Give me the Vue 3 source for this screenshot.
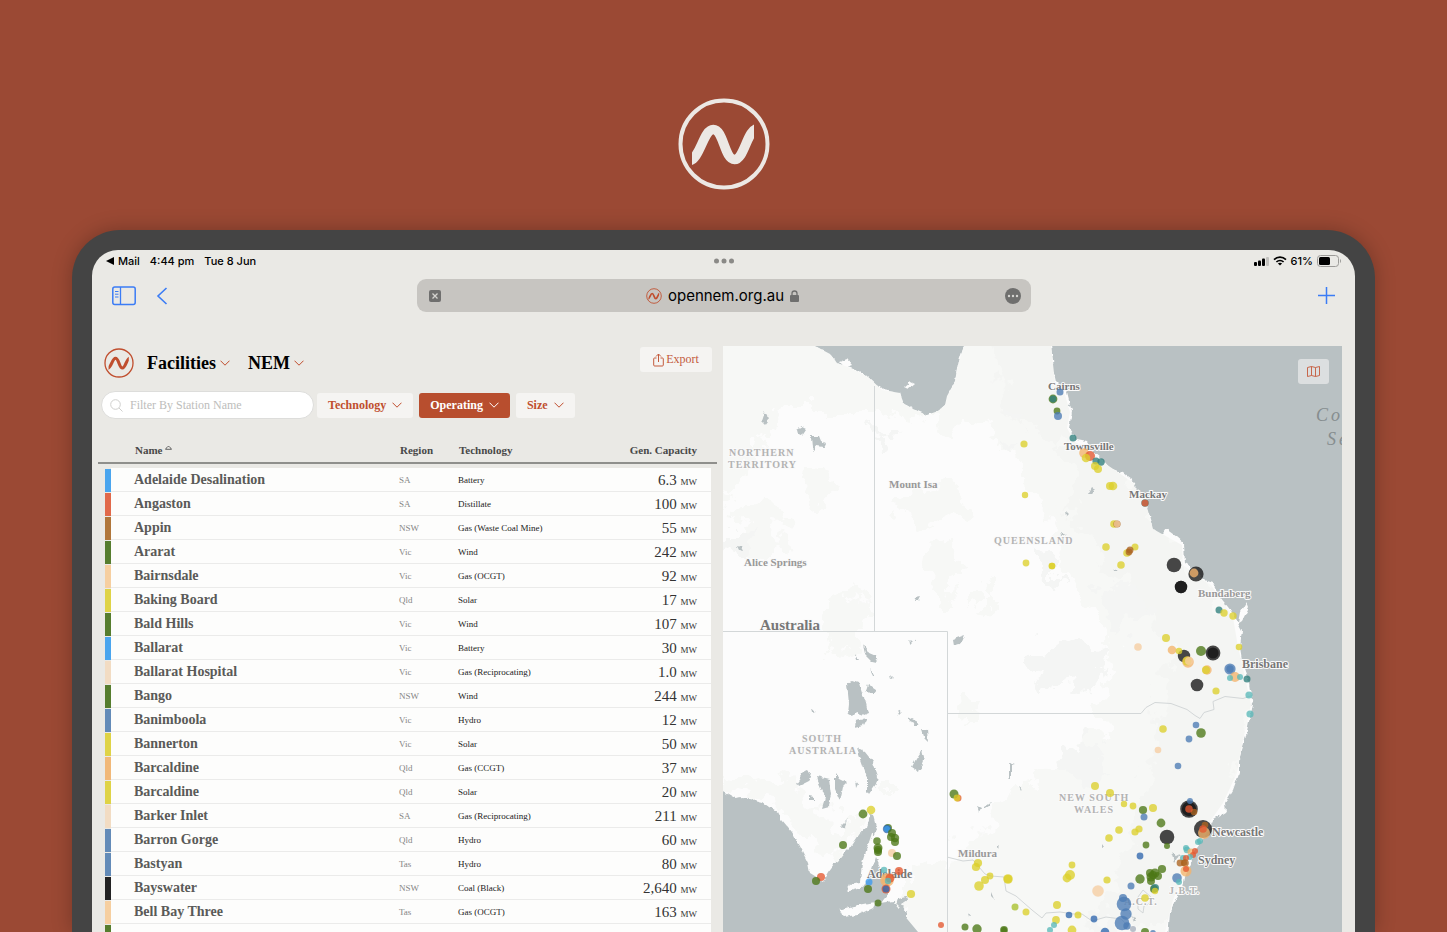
<script setup>
import { ref } from 'vue'

const query = ref('')

const tones = {
  blue: '#4aa5ee',
  red: '#e1694a',
  brown: '#b0763a',
  green: '#567d2e',
  peach: '#f6cfa0',
  yellow: '#dfd346',
  cream: '#f2dcc3',
  hydro: '#638bb8',
  orange: '#f1b878',
  black: '#232323'
}

const facilities = [
  ['Adelaide Desalination', 'SA', 'Battery', '6.3', 'blue'],
  ['Angaston', 'SA', 'Distillate', '100', 'red'],
  ['Appin', 'NSW', 'Gas (Waste Coal Mine)', '55', 'brown'],
  ['Ararat', 'Vic', 'Wind', '242', 'green'],
  ['Bairnsdale', 'Vic', 'Gas (OCGT)', '92', 'peach'],
  ['Baking Board', 'Qld', 'Solar', '17', 'yellow'],
  ['Bald Hills', 'Vic', 'Wind', '107', 'green'],
  ['Ballarat', 'Vic', 'Battery', '30', 'blue'],
  ['Ballarat Hospital', 'Vic', 'Gas (Reciprocating)', '1.0', 'cream'],
  ['Bango', 'NSW', 'Wind', '244', 'green'],
  ['Banimboola', 'Vic', 'Hydro', '12', 'hydro'],
  ['Bannerton', 'Vic', 'Solar', '50', 'yellow'],
  ['Barcaldine', 'Qld', 'Gas (CCGT)', '37', 'orange'],
  ['Barcaldine', 'Qld', 'Solar', '20', 'yellow'],
  ['Barker Inlet', 'SA', 'Gas (Reciprocating)', '211', 'cream'],
  ['Barron Gorge', 'Qld', 'Hydro', '60', 'hydro'],
  ['Bastyan', 'Tas', 'Hydro', '80', 'hydro'],
  ['Bayswater', 'NSW', 'Coal (Black)', '2,640', 'black'],
  ['Bell Bay Three', 'Tas', 'Gas (OCGT)', '163', 'peach']
]

const filters = [
  { label: 'Technology', active: false },
  { label: 'Operating', active: true },
  { label: 'Size', active: false }
]

const fills = {
  y: '#dccf2c',
  g: '#4b7716',
  b: '#4c7bb3',
  n: '#2f66ad',
  t: '#2f7f7c',
  a: '#5bb8b8',
  o: '#f3b36c',
  p: '#f6cda2',
  r: '#e4572f',
  w: '#ac6420',
  k: '#141414',
  s: '#3b9bf0',
  l: '#a9c02c',
  m: '#a8b0be'
}

// kind, x, y, radius
const pins = `b 1060 392 3.5,g 1053 399 4.4,t 1053 399 3.4,g 1057 411 3.4,b 1058 416 4,t 1073 438 3.5,o 1084 453 4.8,r 1090 456 5,y 1086 458 4.3,t 1096 461 3.6,t 1101 462 3.7,y 1095 466 4,y 1098 469 4,y 1110 486 4,y 1113 486 4.3,
y 1024 444 3.6,y 1025 495 3.2,t 1145 503 3.7,r 1145 503 3.5,y 1114 524 3.8,w 1117 524 3.6,p 1117 524 3.2,y 1106 547 3.8,y 1135 547 3.5,y 1127 553 3.8,w 1130 550 3.5,w 1129 552 3.4,y 1121 565 3.8,y 1026 563 3.4,y 1052 566 3.3,y 1052 566 3.3,
k 1174 565 7.3,k 1196 574 7.6,o 1194 573 4.4,k 1181 587 6.2,k 1181 587 6.2,t 1219 610 3.5,y 1224 613 3.7,y 1233 616 3.7,y 1166 638 4,p 1138 647 3.8,o 1172 650 4.3,k 1184 656 6.2,y 1179 651 3.3,o 1188 662 5.8,y 1187 661 4.5,p 1189 661 4,
g 1201 651 5,k 1213 653 7.4,k 1213 653 5.6,y 1239 647 3.3,o 1207 670 4.7,y 1206 670 4,k 1197 685 6.3,y 1216 691 3.6,b 1230 669 5.6,b 1230 669 3.7,o 1235 677 5,a 1230 678 3,a 1240 677 3,t 1247 679 3.5,a 1249 695 3.6,a 1250 714 3.6,
b 1196 725 3.3,g 1201 733 4.8,b 1189 739 3.4,y 1163 729 3.8,p 1158 750 3.3,b 1178 766 3.3,y 1095 786 4,y 1110 793 4,y 1124 804 3.2,y 1133 806 3.4,y 1153 808 4,g 1143 810 4.1,g 1161 823 4.4,b 1144 817 3.5,y 1119 830 3.8,y 1109 838 3.8,y 1135 832 3.6,y 1139 829 3.6,
k 1189 809 8.8,k 1189 809 7.2,b 1190 801 3,w 1194 812 3.3,r 1189 809 3.8,k 1203 829 9,w 1205 825 3.3,o 1204 833 6,r 1203 829 3.8,k 1167 837 7.3,g 1167 846 3,g 1146 845 3.4,n 1140 856 3.4,a 1198 842 3,a 1200 841 3,a 1186 848 3,a 1187 850 3.3,
o 1191 852 3.5,r 1195 851 3,r 1193 855 3,a 1190 857 3,a 1183 858 3,r 1186 858 3,w 1180 863 3.4,w 1185 863 3.8,w 1184 863 3,o 1186 871 5.5,r 1186 869 3,b 1177 878 4.8,a 1179 882 3,g 1162 869 4.1,g 1140 879 4.7,g 1150 873 4,g 1155 873 4.5,g 1158 876 4,g 1151 877 4.5,g 1151 881 4,g 1153 875 4,
g 1154 889 4,t 1155 888 4,y 1155 891 3.2,y 1072 865 3.4,y 1070 875 5,y 1067 878 4.4,y 1107 880 3.6,b 1131 886 3.5,p 1098 891 5.8,y 1145 898 3.8,b 1123 898 4,b 1124 904 7.3,b 1126 914 5.7,b 1122 923 7.3,b 1127 926 3.7,m 1133 929 3,g 1145 932 4,b 1153 933 3,
y 1057 905 4,y 1026 912 3.5,y 1056 920 3.9,y 1078 915 3.5,y 1072 930 4.4,n 1069 915 3.3,n 1094 919 3.4,n 1105 932 4.3,a 1054 925 3,a 1050 930 3,r 958 798 3.5,g 954 794 4.5,y 957 798 3.4,g 863 814 4.4,y 871 810 4.3,g 888 828 4,n 887 829 4.2,s 887 829 3,
g 892 833 4,g 891 837 4,g 895 838 4.2,g 895 842 4,g 877 841 3.8,g 878 848 4.5,g 878 850 4,g 878 852 4,p 892 853 4,g 897 856 4,g 843 845 4,r 821 877 4,g 816 881 4,a 884 870 3.2,r 899 871 4,o 887 880 6.8,o 887 880 5,r 890 878 4.5,a 888 881 3.2,
s 869 882 3.5,g 868 889 4,r 886 889 4.5,n 886 889 3.5,y 911 894 4.1,g 878 903 3.5,y 978 863 4.1,y 976 867 4.1,y 985 880 4,y 990 876 3.4,y 979 886 4.8,y 1008 879 4.8,y 1008 879 4,l 1015 907 3.5,r 941 925 3,g 965 927 3.5,g 977 929 4.7,g 1004 930 3.9,g 1004 930 3`
  .split(/,\s*/)
  .map((entry) => {
    const [kind, x, y, r] = entry.trim().split(' ')
    return { fill: fills[kind], x, y, r }
  })

const places = [
  { name: 'Cairns', x: 1048, y: 390, c: 'city' },
  { name: 'Townsville', x: 1064, y: 450, c: 'city' },
  { name: 'Mackay', x: 1129, y: 498, c: 'city' },
  { name: 'Mount Isa', x: 889, y: 488, c: 'city pale' },
  { name: 'Alice Springs', x: 744, y: 566, c: 'city pale' },
  { name: 'Bundaberg', x: 1198, y: 597, c: 'city pale' },
  { name: 'Mildura', x: 958, y: 857, c: 'city pale' },
  { name: 'Brisbane', x: 1242, y: 668, c: 'metro' },
  { name: 'Newcastle', x: 1212, y: 836, c: 'metro' },
  { name: 'Sydney', x: 1198, y: 864, c: 'metro' },
  { name: 'Adelaide', x: 867, y: 878, c: 'metro' },
  { name: 'Australia', x: 760, y: 630, c: 'country' },
  { name: 'NORTHERN', x: 729, y: 456, c: 'state' },
  { name: 'TERRITORY', x: 728, y: 468, c: 'state' },
  { name: 'QUEENSLAND', x: 994, y: 544, c: 'state' },
  { name: 'SOUTH', x: 802, y: 742, c: 'state' },
  { name: 'AUSTRALIA', x: 789, y: 754, c: 'state' },
  { name: 'NEW SOUTH', x: 1059, y: 801, c: 'state' },
  { name: 'WALES', x: 1074, y: 813, c: 'state' },
  { name: 'J.B.T.', x: 1169, y: 894, c: 'state' },
  { name: 'A.C.T.', x: 1124, y: 905, c: 'state' },
  { name: 'Coral', x: 1316, y: 421, c: 'sea' },
  { name: 'Sea', x: 1327, y: 445, c: 'sea' }
]
</script>

<template>
  <div class="stage">
    <svg class="defs" aria-hidden="true">
      <symbol id="wave" viewBox="0 0 92 92">
        <clipPath id="wave-clip"><rect x="14" y="20" width="62" height="52" /></clipPath>
        <path
          d="M10 63C22 63 25 31.500 35.300 31.500C45.500 31.500 46.500 61.500 56.500 61.500C66.500 61.500 69 31 80 30.500"
          fill="none" stroke="currentColor" stroke-width="9.600" clip-path="url(#wave-clip)"
        />
      </symbol>
      <symbol id="chevron" viewBox="0 0 10 6">
        <path d="M.500 .700L5 5.200 9.500 .700" fill="none" stroke="currentColor" stroke-width="1" />
      </symbol>
    </svg>

    <header class="brand">
      <svg class="brand-mark" viewBox="0 0 92 92" role="img" aria-label="OpenNEM">
        <circle cx="46" cy="46" r="43.500" fill="none" stroke="currentColor" stroke-width="4" />
        <use href="#wave" width="92" height="92" />
      </svg>
    </header>

    <div class="device">
      <div class="screen">
        <div class="status">
          <div class="status-left">
            <span class="back-app">
              <svg width="8" height="8" viewBox="0 0 8 8" aria-hidden="true"><path d="M0 4l8-4v8z" /></svg>
              Mail
            </span>
            <span>4:44 pm</span>
            <span>Tue 8 Jun</span>
          </div>
          <svg width="20" height="6" viewBox="0 0 20 6" fill="#8b8a87" aria-hidden="true">
            <circle cx="2.500" cy="3" r="2.500" /><circle cx="10" cy="3" r="2.500" /><circle cx="17.500" cy="3" r="2.500" />
          </svg>
          <div class="status-right">
            <svg width="15" height="10" viewBox="0 0 15 10" aria-hidden="true">
              <rect x="0" y="6" width="3" height="4" rx="1" /><rect x="4" y="4.500" width="3" height="5.500" rx="1" />
              <rect x="8" y="2.500" width="3" height="7.500" rx="1" /><rect x="12" y="1" width="3" height="9" rx="1" fill="#c2c1be" />
            </svg>
            <svg width="14" height="10" viewBox="0 0 14 10" aria-hidden="true">
              <g fill="none" stroke="#000" stroke-width="1.700">
                <path d="M1 3.600C4.500.200 9.500.200 13 3.600" /><path d="M3.400 6C5.500 4 8.500 4 10.600 6" />
              </g>
              <path d="M4.900 7.400C6 6.500 8 6.500 9.100 7.400L7 9.600z" />
            </svg>
            <span>61%</span>
            <svg width="24" height="12" viewBox="0 0 24 12" aria-hidden="true">
              <rect x=".500" y=".500" width="21" height="11" rx="3" fill="none" stroke="#9c9b98" />
              <rect x="2" y="2" width="11" height="8" rx="1.500" />
              <path d="M23 4v4q1-.500 1-2t-1-2" fill="#9c9b98" />
            </svg>
          </div>
        </div>

        <div class="toolbar">
          <div class="tools">
            <button class="tool" type="button" aria-label="Show sidebar">
              <svg width="24" height="20" viewBox="0 0 24 20" fill="none" stroke="currentColor">
                <rect x=".800" y="1" width="22.400" height="17.500" rx="2" stroke-width="1.500" />
                <path d="M8.500 1v17.500" stroke-width="1.300" /><path d="M3 5.500h3.500M3 8.200h3.500M3 11h3.500" stroke-width="1" />
              </svg>
            </button>
            <button class="tool" type="button" aria-label="Back">
              <svg width="12" height="18" viewBox="0 0 12 18" fill="none" stroke="currentColor" stroke-width="1.600">
                <path d="M10.500 1L2 9l8.500 8" />
              </svg>
            </button>
          </div>
          <div class="address">
            <svg width="12" height="12" viewBox="0 0 12 12" aria-hidden="true">
              <rect width="12" height="12" rx="2" fill="#6f6f6e" /><path d="M3.500 3.500l5 5m0-5l-5 5" stroke="#d5d4d1" stroke-width="1.300" />
            </svg>
            <div class="site">
              <svg class="rust" width="16" height="16" viewBox="0 0 92 92" aria-hidden="true">
                <circle cx="46" cy="46" r="42" fill="none" stroke="currentColor" stroke-width="5" />
                <use href="#wave" width="92" height="92" />
              </svg>
              <span>opennem.org.au</span>
              <svg width="9" height="12" viewBox="0 0 9 12" aria-hidden="true">
                <rect x="0" y="5" width="9" height="7" rx="1" fill="#6f6f6e" />
                <path d="M2 5.500V3.500a2.500 2.500 0 0 1 5 0v2" fill="none" stroke="#6f6f6e" stroke-width="1.300" />
              </svg>
            </div>
            <svg width="16" height="16" viewBox="0 0 16 16" aria-hidden="true">
              <circle cx="8" cy="8" r="8" fill="#6f6f6e" />
              <g fill="#d5d4d1"><circle cx="4" cy="8" r="1.200" /><circle cx="8" cy="8" r="1.200" /><circle cx="12" cy="8" r="1.200" /></g>
            </svg>
          </div>
          <div class="tools end">
            <button class="tool" type="button" aria-label="New tab">
              <svg width="17" height="17" viewBox="0 0 17 17" stroke="currentColor" stroke-width="1.500">
                <path d="M8.500 0v17M0 8.500h17" />
              </svg>
            </button>
          </div>
        </div>

        <main class="content">
          <section class="panel">
            <div class="heading">
              <svg class="rust" width="30" height="30" viewBox="0 0 92 92" role="img" aria-label="OpenNEM">
                <circle cx="46" cy="46" r="43" fill="none" stroke="currentColor" stroke-width="4" />
                <use href="#wave" width="92" height="92" />
              </svg>
              <button class="title" type="button">Facilities <svg class="rust" width="10" height="6"><use href="#chevron" /></svg></button>
              <button class="title" type="button">NEM <svg class="rust" width="10" height="6"><use href="#chevron" /></svg></button>
              <button class="export" type="button">
                <svg width="11" height="14" viewBox="0 0 11 14" fill="none" stroke="currentColor">
                  <path d="M3.500 5H1.500Q.700 5 .700 5.800V12q0 1 1 1h7.600q1 0 1-1V5.800Q10.300 5 9.500 5H7.500M5.500 9V1M3 3.500L5.500 1 8 3.500" />
                </svg>
                Export
              </button>
            </div>

            <div class="filters">
              <label class="search">
                <svg width="13" height="13" viewBox="0 0 13 13" fill="none" stroke="#cfcfcd" aria-hidden="true">
                  <circle cx="5.500" cy="5.500" r="4.800" /><path d="M9 9l3.500 3.500" />
                </svg>
                <input v-model="query" type="text" placeholder="Filter By Station Name" aria-label="Filter By Station Name" />
              </label>
              <button v-for="f in filters" :key="f.label" type="button" class="filter" :class="{ active: f.active }">
                {{ f.label }} <svg width="10" height="6"><use href="#chevron" /></svg>
              </button>
            </div>

            <table>
              <colgroup><col class="c-bar" /><col /><col class="c-region" /><col class="c-tech" /><col class="c-cap" /></colgroup>
              <thead>
                <tr>
                  <th></th>
                  <th class="name">Name <svg width="7" height="5" viewBox="0 0 7 5" aria-hidden="true"><path d="M.500 4.300Q1 3 2 2.600L3.500 1 5 2.600Q6 3 6.500 4.300z" fill="none" stroke="#555" stroke-width=".900" /></svg></th>
                  <th>Region</th>
                  <th>Technology</th>
                  <th class="cap">Gen. Capacity</th>
                </tr>
              </thead>
              <tbody>
                <tr v-for="(f, i) in facilities" :key="i">
                  <td class="bar"><span :style="{ background: tones[f[4]] }"></span></td>
                  <td class="name">{{ f[0] }}</td>
                  <td class="region">{{ f[1] }}</td>
                  <td class="tech">{{ f[2] }}</td>
                  <td class="cap">{{ f[3] }} <small>MW</small></td>
                </tr>
                <tr>
                  <td class="bar"><span :style="{ background: tones.green }"></span></td>
                  <td></td>
                  <td></td>
                  <td></td>
                  <td class="cap"></td>
                </tr>
              </tbody>
            </table>
          </section>

          <section class="map">
            <svg class="canvas" viewBox="723 346 619 586" preserveAspectRatio="xMinYMin slice" role="img" aria-label="Map of facilities">
              <defs>
                <filter id="coast" x="-5%" y="-5%" width="110%" height="110%">
                  <feTurbulence type="fractalNoise" baseFrequency=".14" numOctaves="3" seed="4" />
                  <feDisplacementMap in="SourceGraphic" scale="5" xChannelSelector="R" yChannelSelector="G" />
                </filter>
                <filter id="rough" x="-5%" y="-5%" width="110%" height="110%">
                  <feTurbulence type="fractalNoise" baseFrequency=".05" numOctaves="4" seed="9" />
                  <feDisplacementMap in="SourceGraphic" scale="46" xChannelSelector="R" yChannelSelector="G" />
                </filter>
                <clipPath id="mainland">
                  <path d="M723 346H815L830 354 837 363 853 369 868 377 882 390 900 393 903 403 913 409 927 415 938 411 945 405 947 396 955 382 957 368 961 355 964 346H1051L1055 382 1065 395 1070 412 1067 428 1075 442 1090 450 1103 462 1135 484 1145 500 1153 529 1182 545 1183 565 1211 585 1233 617 1238 647 1245 677 1251 705 1243 740 1237 773 1223 803 1211 820 1195 847 1183 877 1173 900 1165 932H918L893 902 887 893 883 887 876 862 870 882 862 885 862 863 873 830 868 817 858 837 830 872 823 880 810 873 800 847 782 820 763 802 723 791Z" />
                </clipPath>
              </defs>
              <rect x="723" y="346" width="619" height="586" fill="#b9c1c3" />
              <g filter="url(#coast)" fill="#fcfcfc">
                <path d="M700 320H815V346L830 354 837 363 853 369 868 377 882 390 900 393 903 403 913 409 927 415 938 411 945 405 947 396 955 382 957 368 961 355 964 346V320H1051V346L1053 360 1054 373 1056 382 1067 393 1072 412 1069 428 1077 440 1087 442 1092 450 1103 460 1110 468 1123 473 1135 482 1137 490 1146 498 1148 510 1153 527 1159 538 1166 529 1177 537 1184 543 1185 563 1197 570 1205 580 1213 583 1220 597 1228 607 1234 615 1242 630 1240 647 1242 660 1248 677 1250 690 1253 705 1250 717 1245 740 1239 760 1239 773 1233 790 1225 803 1226 812 1213 820 1207 833 1197 847 1192 860 1185 877 1183 888 1175 900 1170 913 1167 950H925L918 932 913 920 902 907 893 902 880 904 889 893 883 885 887 877 880 867 876 858 872 870 868 880 862 888 847 892 850 884 860 882 862 863 867 847 875 830 870 815 867 827 858 835 850 847 837 860 828 872 823 881 810 873 808 863 800 847 792 832 782 820 778 812 770 807 763 802 743 797 735 798 723 791H700Z" />
                <path d="M840 910L853 906 875 902 872 908 858 915 843 917zM1247 602l-6 10-2 11 3-2 7-14zM904 388l7-6 4 2-7 6zM840 362l8-3 5 6-8 3z" />
              </g>

              <g clip-path="url(#mainland)">
                <g filter="url(#rough)">
                  <path fill="#f7f8f6" d="M700 330h370l200 280 10 340H900l50-90 60-60 90-70 10-90-50-80-20-80-60-50-100-20-100 0-60 110h-40z" />
                  <path fill="#f2f4f2" d="M985 340h70l20 80 70 80 60 90 60 60-10 60-30 110-60 110-70 0 30-80 30-100 15-100-40-60-50-60-50-70z" opacity=".6" />
                  <g fill="#f7f8f6">
                    <path d="M735 520l30-20 20 15-10 40-25 5zM800 480l30-5 5 20-20 10zM825 600l25-10 20 20-15 40-25 5zM925 550l20-12 15 30-10 30-20 0zM975 590l15-5 0 20-15 10zM890 500l60-20 20 30-50 20zM723 770l70 15 60 60-20 20-50-60-60-15zM900 870l60-10 60 40-20 50h-100zM1020 420l40 20 20 60-20 20-40-50z" />
                    <path d="M845 815l20 0 0 20-20 10zM885 780l10 0 0 20-10 0zM965 700l15 5-5 20-15 0z" />
                  </g>
                  <g fill="#f4f5f4">
                    <path d="M730 530l25-5-5 25-20 5zM870 425l20 10-10 10zM1010 400l15 8-10 12zM1000 440l20 5-10 10zM1030 655l50-20 30 20-20 30-50 5zM1060 760l30-20 20 30-20 20zM1100 590l30-10 20 30-30 20zM1040 550l20 10 0 25-20-10z" />
                  </g>
                </g>
              </g>

              <g filter="url(#coast)" fill="#b9c1c3">
                <path d="M764 412l3 4 1 5-3 4-4-4zM797 430l5-3 4 2-4 6-4-1zM811 436l8 0 2 5 5 2-2 4-7-1-2 5-3-3zM737 546l4 1 2 4-4-1zM916 598l5-1-2 4-4 0zM953 639l11-4-4 9-6 1zM810 708l6 3-5 1zM809 796l5 1 0 4-5 0z" />
                <path d="M847 683l5-2 6 2 3 10 6 10 2 10-5 2-8-3-4 4-4-2 1-10zM855 720l12-2-4 8-9 2z" />
                <path d="M857 748l8 4 8 10 5 14-2 8-7 10-2-3 0-14-4-12zM817 776l13 3 2 16-3 11-7 2 3-10-6-14zM796 784l10-14 5 2-3 10-8 4zM835 773l4 6 8 4-4 4-3 14-5-12zM855 780l3 4-2 4zM842 825l6-6-3 8-4 1zM855 655l4 6-3 0zM863 645l5 8 7 3 2 6-5-1-7-7zM870 669l6 6-3 0zM868 684l9 6-4 5-7-5zM908 716l8 4 3 6-5 0zM922 729l5 1 1 12-3-3zM922 750l2 8-5 14-7-5 4-8zM890 675l3 3-2 1zM897 710l4 3-2 2zM909 640l3 3-2 2zM914 638l3 2-2 1z" />
                <path d="M873 815l2 8 2 8-3 2-4-6-3-5 3-8zM898 898l9-2 1 4-6 4 3 5-4 0-5-5zM1009 762l6 2-4 1 0 14-2-2zM977 806l4 2-2 4zM984 807l7-5-2 4-5 3zM1018 786l4 3-2 1zM997 846l2 2-2 1zM991 892l3 7-3-3zM968 913l3 4-2 1zM1092 487l4 3-4 4-4 0zM1061 532l5 2-4 2zM1065 512l3 3-2 2zM1113 568l6 3-5 0zM1172 852l4 4 4-2-5 8zM1103 843l2 3-2 1zM1130 912l6 9-2 0zM1224 599l10-4 10 3 1 6-7 9-9-7zM1137 480l4 4-3 6-4-4z" />
              </g>

              <g fill="none" stroke="#d3d7d8">
                <path d="M874.500 386V631M723 631.500H947.500V932M947.500 713.500H1141l5-6 9-5 16 1 8 3 8 3 8 6 5 3 4-6 10-3-1-8 12-5 9 1 9 1 9-3M947 857l16 4 10-1 12 14 6 2 13 1 2 14 10 5 16 14 10 8 4-5 14-1 14 2 8 0 10 7 14-4 15 2 6 6M1143 890l9 8-3 6-5 2-1 7-5-4 0-12z" />
              </g>

              <text v-for="(p, i) in places" :key="'t' + i" :x="p.x" :y="p.y" :class="p.c">{{ p.name }}</text>
              <circle v-for="(p, i) in pins" :key="i" :cx="p.x" :cy="p.y" :r="p.r" :fill="p.fill" opacity=".78" />
            </svg>
            <button class="map-toggle" type="button" aria-label="Toggle map">
              <svg width="13" height="11" viewBox="0 0 13 11" fill="none" stroke="currentColor" stroke-width=".900">
                <path d="M.500 1.500L4.500.500 8.500 1.500 12.500.500V9.500L8.500 10.500 4.500 9.500.500 10.500zM4.500.500v9M8.500 1.500v9" />
              </svg>
            </button>
          </section>
        </main>
      </div>
    </div>
  </div>
</template>

<style>
html,
body {
  margin: 0;
  background: #9b4934;
}
</style>

<style scoped>
.stage {
  display: flex;
  flex-direction: column;
  height: 100vh;
  overflow: hidden;
  background: #9b4934;
  font-family: "Liberation Serif", serif;
}
.defs {
  position: absolute;
  width: 0;
  height: 0;
}
svg {
  flex: none;
}
button {
  border: 0;
  margin: 0;
  padding: 0;
  background: none;
  font: inherit;
  color: inherit;
}
.brand {
  display: flex;
  justify-content: center;
  padding: 98px 0 40px;
  color: #ece8e4;
}
.brand-mark {
  width: 92px;
  height: 92px;
}
.device {
  display: flex;
  flex: 1;
  min-height: 0;
  margin: 0 72px;
  padding: 20px 20px 0;
  border-radius: 48px 48px 0 0;
  background: #444;
  box-shadow: 0 0 20px rgba(0, 0, 0, 0.25);
}
.screen {
  display: flex;
  flex: 1;
  flex-direction: column;
  min-width: 0;
  border-radius: 26px 26px 0 0;
  background: #eae9e5;
}
.status {
  display: grid;
  grid-template-columns: 1fr auto 1fr;
  align-items: center;
  height: 22px;
  padding: 0 14px;
  font: 500 11px "Inter", sans-serif;
}
.status-left,
.status-right,
.back-app {
  display: flex;
  align-items: center;
}
.status-left {
  gap: 10px;
}
.back-app {
  gap: 4px;
}
.status-right {
  justify-content: flex-end;
  gap: 4px;
}
.toolbar {
  display: grid;
  grid-template-columns: 1fr 614px 1fr;
  align-items: center;
  height: 33px;
  margin-top: 7px;
  padding: 0 20px;
}
.tools {
  display: flex;
  align-items: center;
  gap: 20px;
}
.end {
  justify-content: flex-end;
}
.tool {
  display: flex;
  color: #3b7cf5;
}
.address {
  display: flex;
  align-items: center;
  justify-content: space-between;
  height: 33px;
  box-sizing: border-box;
  padding: 0 10px 0 12px;
  border-radius: 9px;
  background: #c7c5c1;
}
.site {
  display: flex;
  align-items: center;
  gap: 6px;
  font: 15px "Inter", sans-serif;
}
.rust {
  color: #c04e2e;
}
.content {
  display: grid;
  flex: 1;
  grid-template-columns: 1fr 1fr;
  grid-template-rows: minmax(0, 1fr);
  gap: 6px;
  min-height: 0;
  margin-top: 34px;
  padding: 0 13px 0 6px;
}
.panel {
  min-width: 0;
  overflow: hidden;
}
.heading {
  display: flex;
  align-items: center;
  height: 34px;
  padding: 0 5px 0 6px;
}
.title {
  display: flex;
  align-items: center;
  gap: 4px;
  margin-left: 13px;
  font-size: 18px;
  font-weight: 700;
}
.title + .title {
  margin-left: 18px;
}
.export {
  display: flex;
  align-items: center;
  justify-content: center;
  align-self: flex-start;
  gap: 2px;
  width: 72px;
  height: 25px;
  margin: 1px 0 0 auto;
  border-radius: 3px;
  background: #f5f4f2;
  color: #c45a3c;
  font-size: 12px;
}
.filters {
  display: flex;
  align-items: center;
  height: 28px;
  margin-top: 11px;
  padding-left: 3px;
}
.search {
  display: flex;
  align-items: center;
  gap: 7px;
  box-sizing: border-box;
  width: 213px;
  height: 28px;
  margin-right: 3px;
  padding: 0 8px;
  border: 1px solid #dddddb;
  border-radius: 14px;
  background: #fff;
}
.search input {
  flex: 1;
  min-width: 0;
  padding: 0;
  border: 0;
  outline: 0;
  background: none;
  font: 12px "Liberation Serif", serif;
}
.search input::placeholder {
  color: #bdbdbb;
}
.filter {
  display: flex;
  align-items: center;
  gap: 6px;
  height: 25px;
  margin-right: 6px;
  padding: 0 11px;
  border-radius: 3px;
  background: #f5f4f2;
  color: #c04e2e;
  font-size: 12px;
  font-weight: 700;
}
.filter.active {
  background: #b84e2e;
  color: #fff;
}
table {
  width: 100%;
  margin-top: 19px;
  border-spacing: 0;
  table-layout: fixed;
}
.c-bar {
  width: 13px;
}
.c-region {
  width: 59px;
}
.c-tech {
  width: 140px;
}
.c-cap {
  width: 119px;
}
th {
  height: 24px;
  padding: 0 0 0 1px;
  border-bottom: 2px solid #8f8f8c;
  color: #484848;
  font-size: 11px;
  font-weight: 700;
  line-height: 14px;
  text-align: left;
}
th.name svg {
  vertical-align: 4px;
}
thead::after {
  content: "";
  display: block;
  height: 4px;
}
td {
  height: 24px;
  padding: 0;
  background: #fdfdfc;
  box-shadow: inset 0 -1px #ebebea;
  white-space: nowrap;
}
td.bar {
  padding-left: 7px;
  background: none;
  box-shadow: none;
}
.bar span {
  display: block;
  height: 23px;
}
th.name {
  padding-left: 24px;
}
td.name {
  padding-left: 23px;
  color: #5a5a58;
  font-size: 14px;
  font-weight: 700;
}
.region {
  color: #858585;
  font-size: 9px;
}
.tech {
  color: #222;
  font-size: 9px;
}
td.cap {
  padding-right: 14px;
  border-right: 6px solid transparent;
  background-clip: padding-box;
  color: #333;
  font-size: 15px;
  text-align: right;
}
td.cap small {
  font-size: 9px;
}
th.cap {
  padding-right: 20px;
  text-align: right;
}
.map {
  position: relative;
  min-width: 0;
}
.canvas {
  display: block;
  width: 100%;
  height: 100%;
}
.map-toggle {
  position: absolute;
  top: 13px;
  right: 13px;
  display: flex;
  align-items: center;
  justify-content: center;
  width: 31px;
  height: 25px;
  border-radius: 3px;
  background: #dcdfe0;
  color: #c4593b;
}
text {
  font-weight: 700;
  paint-order: stroke;
  stroke: #fafafa;
  stroke-width: 2px;
  stroke-linejoin: round;
}
.city {
  fill: #777;
  font-size: 11px;
}
.city.pale {
  fill: #999;
}
.metro {
  fill: #777;
  font-size: 12px;
}
.country {
  fill: #777;
  font-size: 15px;
}
.state {
  fill: #b3b3b3;
  font-size: 10px;
  letter-spacing: 1px;
}
.sea {
  fill: #868d8f;
  font-size: 18px;
  font-style: italic;
  font-weight: 400;
  letter-spacing: 3px;
  stroke: none;
}
</style>
